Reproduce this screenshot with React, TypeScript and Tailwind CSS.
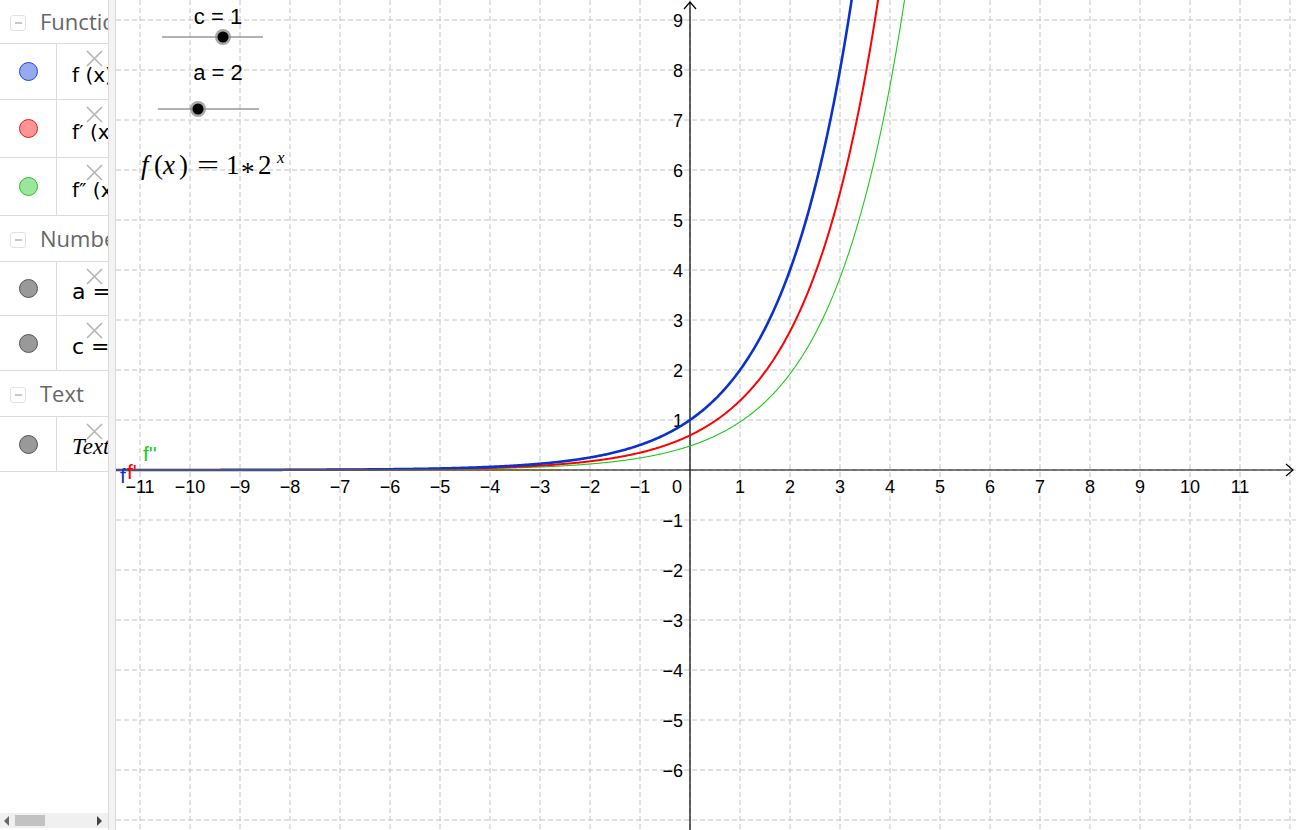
import React from 'react';

const X = (x: number) => 690 + 50 * x;
const Y = (y: number) => 470 - 50 * y;

// sample k * 2^x until it leaves the top of the canvas
function curvePath(k: number) {
  const pts: string[] = [];
  for (let x = -11.6; x <= 5; x += 0.02) {
    const y = k * Math.pow(2, x);
    const sy = Y(y);
    pts.push(`${X(x).toFixed(2)},${sy.toFixed(2)}`);
    if (sy < -10) break;
  }
  return 'M' + pts.join(' L');
}

const gridX = Array.from({ length: 24 }, (_, i) => 140 + i * 50);
const gridY = Array.from({ length: 17 }, (_, i) => 20 + i * 50);
const xTicks = Array.from({ length: 23 }, (_, i) => i - 11).filter((n) => n !== 0);
const yTicks = [9, 8, 7, 6, 5, 4, 3, 2, 1, -1, -2, -3, -4, -5, -6];

const fmt = (n: number) => (n < 0 ? '\u2212' + Math.abs(n) : String(n));

function Dot({ fill, stroke }: { fill: string; stroke: string }) {
  return <span className={`block w-[19px] h-[19px] rounded-full border ${fill} ${stroke}`} />;
}

function Cross() {
  return (
    <svg className="absolute top-[6px] right-[5px]" width="17" height="17" viewBox="0 0 17 17">
      <path d="M1 1 L16 16 M16 1 L1 16" stroke="#b4b4b4" strokeWidth="1.6" />
    </svg>
  );
}

function Header({ label, h }: { label: string; h: string }) {
  return (
    <div className={`flex items-center ${h} border-b border-[#dcdcdc] pl-[10px] whitespace-nowrap`}>
      <span className="shrink-0 flex items-center justify-center w-[16px] h-[16px] rounded-[3px] border border-[#e2e2e2] mr-[14px] mt-[3px]">
        <span className="block w-[7px] h-[1.5px] bg-[#c8c8c8]" />
      </span>
      <span className="text-[22px] text-[#666] font-['Open_Sans',sans-serif]">{label}</span>
    </div>
  );
}

function Row({ h, dot, children }: { h: string; dot: React.ReactNode; children: React.ReactNode }) {
  return (
    <div className={`flex ${h} border-b border-[#dcdcdc]`}>
      <div className="w-[57px] shrink-0 flex items-center justify-center border-r border-[#dcdcdc]">{dot}</div>
      <div className="relative flex-1 flex items-center pl-[15px] pt-[6px] whitespace-nowrap overflow-hidden text-black font-['DejaVu_Sans',sans-serif] text-[20px]">
        {children}
        <Cross />
      </div>
    </div>
  );
}

function AlgebraPanel() {
  return (
    <div className="w-[108px] shrink-0 h-full flex flex-col overflow-hidden bg-white">
      <Header label="Functions" h="h-[44px]" />
      <Row h="h-[56px]" dot={<Dot fill="bg-[#98aaee]" stroke="border-[#1f45d6]" />}>
        <span>f (x) = 1 · 2<sup>x</sup></span>
      </Row>
      <Row h="h-[58px]" dot={<Dot fill="bg-[#ff9494]" stroke="border-[#e01818]" />}>
        <span>f′ (x) = 0.69</span>
      </Row>
      <Row h="h-[58px]" dot={<Dot fill="bg-[#9be69b]" stroke="border-[#22c322]" />}>
        <span>f″ (x) = 0.48</span>
      </Row>
      <Header label="Numbers" h="h-[46px]" />
      <Row h="h-[54px]" dot={<Dot fill="bg-[#999]" stroke="border-[#555]" />}>
        <span className="text-[22px]">a = 2</span>
      </Row>
      <Row h="h-[55px]" dot={<Dot fill="bg-[#999]" stroke="border-[#555]" />}>
        <span className="text-[22px]">c = 1</span>
      </Row>
      <Header label="Text" h="h-[46px]" />
      <Row h="h-[55px]" dot={<Dot fill="bg-[#999]" stroke="border-[#555]" />}>
        <span className="italic font-['Liberation_Serif',serif] text-[23px]">Text1</span>
      </Row>
      <div className="flex-1" />
      {/* horizontal scrollbar */}
      <div className="h-[15px] mb-[2px] flex items-center bg-[#f0f0f0] px-[4px]">
        <span className="w-0 h-0 border-y-[5px] border-y-transparent border-r-[5px] border-r-[#666]" />
        <span className="block ml-[6px] w-[30px] h-[11px] bg-[#c2c2c2]" />
        <span className="flex-1" />
        <span className="w-0 h-0 border-y-[5px] border-y-transparent border-l-[5px] border-l-[#444] mr-[2px]" />
      </div>
    </div>
  );
}

function Slider({ label, y, ty, x1, x2, px }: { label: string; y: number; ty: number; x1: number; x2: number; px: number }) {
  return (
    <g>
      <text x={218} y={ty} textAnchor="middle" fontSize="22" fontFamily="Liberation Sans, Arial, sans-serif" fill="#000">
        {label}
      </text>
      <line x1={x1} y1={y} x2={x2} y2={y} stroke="#666" strokeWidth="1" />
      <circle cx={px} cy={y} r="8" fill="#8a8a8a" opacity="0.75" />
      <circle cx={px} cy={y} r="5.5" fill="#000" />
    </g>
  );
}

function GraphView() {
  return (
    <div className="flex-1 h-full bg-white overflow-hidden">
      <svg width="1180" height="830" viewBox="116 0 1180 830" className="block">
        {/* grid */}
        {gridX.map((x) => (
          <line key={'gx' + x} x1={x} y1={0} x2={x} y2={830} stroke="#c4c4c4" strokeWidth="1" strokeDasharray="5 3" />
        ))}
        {gridY.map((y) => (
          <line key={'gy' + y} x1={116} y1={y} x2={1296} y2={y} stroke="#c4c4c4" strokeWidth="1" strokeDasharray="5 3" />
        ))}

        {/* axes */}
        <line x1={116} y1={470} x2={1293} y2={470} stroke="#000" strokeWidth="1.2" />
        <path d="M1286 464 L1293 470 L1286 476" fill="none" stroke="#000" strokeWidth="1.2" />
        <line x1={690} y1={830} x2={690} y2={2} stroke="#000" strokeWidth="1.2" />
        <path d="M684 9 L690 2 L696 9" fill="none" stroke="#000" strokeWidth="1.2" />

        <g fontSize="18" fontFamily="Liberation Sans, Arial, sans-serif" fill="#000">
          {xTicks.map((n) => (
            <text key={'xt' + n} x={X(n)} y={493} textAnchor="middle">
              {fmt(n)}
            </text>
          ))}
          <text x={677} y={493} textAnchor="middle">0</text>
          {yTicks.map((n) => (
            <text key={'yt' + n} x={683} y={Y(n) + 7} textAnchor="end">
              {fmt(n)}
            </text>
          ))}
        </g>

        {/* functions */}
        <path d={curvePath(Math.LN2 * Math.LN2)} fill="none" stroke="#1ec81e" strokeWidth="1.1" />
        <path d={curvePath(Math.LN2)} fill="none" stroke="#ff0000" strokeWidth="2" />
        <path d={curvePath(1)} fill="none" stroke="#0a32cc" strokeWidth="2.6" />
        <line x1={116} y1={470} x2={560} y2={470} stroke="#8a6a20" strokeWidth="1.6" opacity="0.8" />

        <g fontSize="21" fontFamily="Liberation Sans, Arial, sans-serif">
          <text x={143} y={461} fill="#1ec81e">f''</text>
          <text x={127} y={479} fill="#ff0000">f'</text>
          <text x={120} y={483} fill="#0a32cc">f</text>
        </g>

        {/* sliders */}
        <Slider label="c = 1" ty={24} y={37} x1={162} x2={263} px={223} />
        <Slider label="a = 2" ty={80} y={109} x1={158} x2={259} px={198} />

        {/* text object: f(x) = 1 * 2^x */}
        <g fontSize="27" fontFamily="Liberation Serif, Times New Roman, serif" fill="#000">
          <text x={141} y={174} fontStyle="italic">f</text>
          <text x={154} y={174}>(</text>
          <text x={163} y={174} fontStyle="italic">x</text>
          <text x={179} y={174}>)</text>
          <text x={197} y={174} textLength={22} lengthAdjust="spacingAndGlyphs">=</text>
          <text x={226} y={174}>1</text>
          <text x={241} y={181}>*</text>
          <text x={258} y={174}>2</text>
          <text x={277} y={163} fontSize="17" fontStyle="italic">x</text>
        </g>
      </svg>
    </div>
  );
}

export default function App() {
  return (
    <div className="w-[1296px] h-[830px] flex bg-white overflow-hidden">
      <AlgebraPanel />
      {/* split pane divider */}
      <div className="w-[8px] shrink-0 h-full bg-[#f3f3f3] border-l border-r border-[#dadada]" />
      <GraphView />
    </div>
  );
}
